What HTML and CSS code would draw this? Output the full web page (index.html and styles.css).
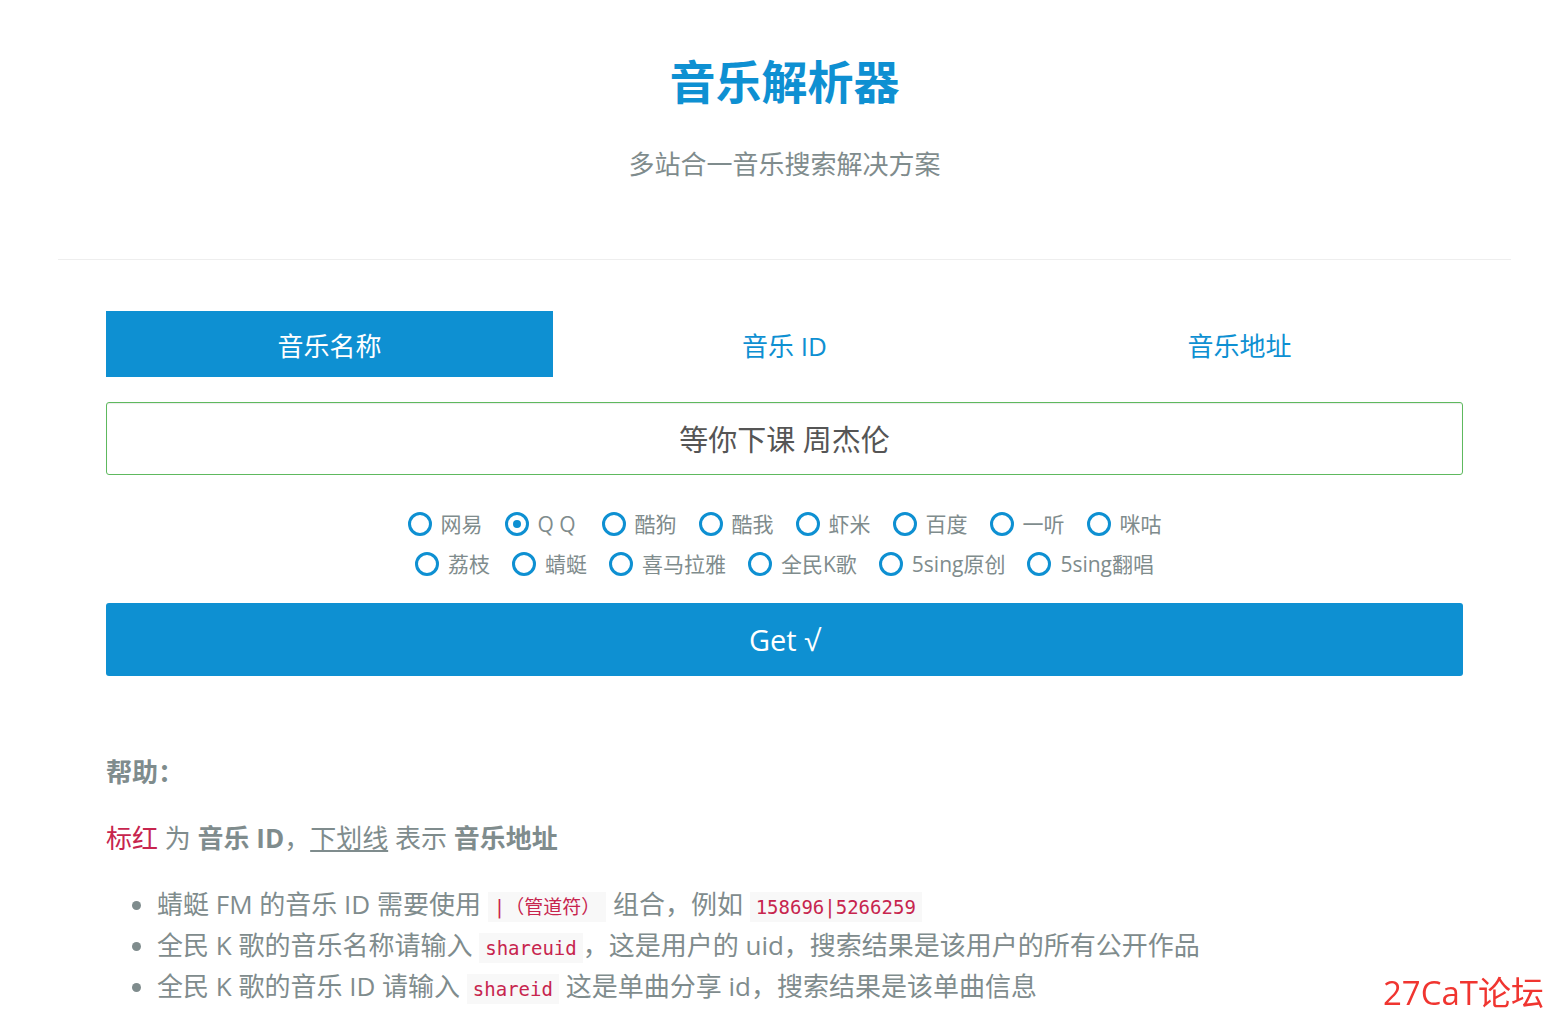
FILE: index.html
```html
<!DOCTYPE html>
<html lang="zh-CN">
<head>
<meta charset="utf-8">
<meta name="viewport" content="width=device-width, initial-scale=1">
<title>音乐解析器</title>
<link rel="stylesheet" href="styles.css">
</head>
<body>
<div class="page">
  <header class="header">
    <h1 class="title">音乐解析器</h1>
    <p class="subtitle">多站合一音乐搜索解决方案</p>
  </header>
  <main class="content">
    <nav class="tabs">
      <a class="tab tab-active" href="#name">音乐名称</a>
      <a class="tab" href="#id">音乐 ID</a>
      <a class="tab" href="#url">音乐地址</a>
    </nav>
    <form class="form">
      <input class="query" type="text" aria-label="音乐名称" value="等你下课 周杰伦">
      <div class="sources">
        <div class="source-row">
          <label class="source"><input type="radio" name="site"><span>网易</span></label>
          <label class="source"><input type="radio" name="site" checked><span>Q Q</span></label>
          <label class="source"><input type="radio" name="site"><span>酷狗</span></label>
          <label class="source"><input type="radio" name="site"><span>酷我</span></label>
          <label class="source"><input type="radio" name="site"><span>虾米</span></label>
          <label class="source"><input type="radio" name="site"><span>百度</span></label>
          <label class="source"><input type="radio" name="site"><span>一听</span></label>
          <label class="source"><input type="radio" name="site"><span>咪咕</span></label>
        </div>
        <div class="source-row">
          <label class="source"><input type="radio" name="site"><span>荔枝</span></label>
          <label class="source"><input type="radio" name="site"><span>蜻蜓</span></label>
          <label class="source"><input type="radio" name="site"><span>喜马拉雅</span></label>
          <label class="source"><input type="radio" name="site"><span>全民K歌</span></label>
          <label class="source"><input type="radio" name="site"><span>5sing原创</span></label>
          <label class="source"><input type="radio" name="site"><span>5sing翻唱</span></label>
        </div>
      </div>
      <button class="submit" type="button">Get √</button>
    </form>
    <section class="help">
      <p><b>帮助：</b></p>
      <p><span class="red">标红</span> 为 <b>音乐 ID</b>，<u>下划线</u> 表示 <b>音乐地址</b></p>
      <ul class="tips">
        <li>蜻蜓 FM 的音乐 ID 需要使用 <code>|（管道符）</code> 组合，例如 <code>158696|5266259</code></li>
        <li>全民 K 歌的音乐名称请输入 <code>shareuid</code>，这是用户的 uid，搜索结果是该用户的所有公开作品</li>
        <li>全民 K 歌的音乐 ID 请输入 <code>shareid</code> 这是单曲分享 id，搜索结果是该单曲信息</li>
      </ul>
    </section>
  </main>
</div>
<div class="watermark">27CaT论坛</div>
</body>
</html>
```
FILE: styles.css
```css
* {
  box-sizing: border-box;
}

body {
  margin: 0;
  background: #fff;
  color: #7f8c8d;
  font-family: "Open Sans", "Noto Sans CJK SC", sans-serif;
  font-size: 26px;
  line-height: 41px;
}

p,
h1,
ul {
  margin: 0;
}

.page {
  padding: 46px 48px 24px 58px;
}

.header {
  padding-bottom: 74px;
  border-bottom: 1px solid #eee;
  text-align: center;
}

.title {
  color: #0e90d2;
  font-size: 46px;
  line-height: 70px;
}

.subtitle {
  margin-top: 28px;
}

.content {
  padding: 51px 48px 0;
}

.tabs {
  display: grid;
  grid-template-columns: repeat(3, 1fr);
  gap: 8px;
}

.tab {
  padding: 15px 0 10px;
  color: #0e90d2;
  text-align: center;
  text-decoration: none;
}

.tab-active {
  background: #0e90d2;
  color: #fff;
}

.query,
.submit {
  display: block;
  width: 100%;
  height: 73px;
  border-radius: 3px;
  font-family: inherit;
  font-size: 29px;
  text-align: center;
}

.query {
  margin-top: 25px;
  padding: 0 0 2px;
  border: 1px solid #5eb95e;
  background: #fff;
  box-shadow: inset 0 1px 1px rgba(0, 0, 0, 0.08);
  color: #555;
}

.sources {
  padding: 29px 0 19px;
}

.source-row {
  display: flex;
  flex-wrap: wrap;
  justify-content: center;
  column-gap: 22px;
}

.source {
  display: flex;
  align-items: center;
  gap: 9px;
  min-width: 75px;
  font-size: 21px;
  line-height: 40px;
}

.source input {
  display: grid;
  place-items: center;
  width: 24px;
  height: 24px;
  margin: 0;
  border: 3px solid #0e90d2;
  border-radius: 50%;
  appearance: none;
}

.source input:checked::before {
  width: 8px;
  height: 8px;
  border-radius: 50%;
  background: #0e90d2;
  content: "";
}

.submit {
  padding: 0;
  border: 0;
  background: #0e90d2;
  color: #fff;
}

.help {
  display: grid;
  gap: 25px;
  padding-top: 76px;
}

.red {
  color: #c7254e;
}

.tips {
  padding-left: 51px;
}

code {
  padding: 4px 6px;
  background: #f8f8f8;
  color: #c7254e;
  font-family: "DejaVu Sans Mono", "Noto Sans CJK SC", monospace;
  font-size: 19px;
  line-height: 20px;
}

.watermark {
  position: fixed;
  right: 15px;
  bottom: 21px;
  color: #f03530;
  font-size: 33px;
}
```
